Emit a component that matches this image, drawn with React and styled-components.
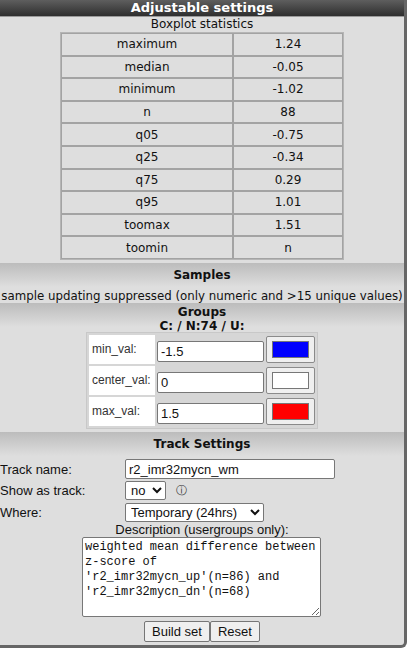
import React from "react";
import styled, { createGlobalStyle } from "styled-components";

const GlobalStyle = createGlobalStyle`
  body {
    margin: 0;
    background: #ffffff;
    font-family: "DejaVu Sans", Verdana, sans-serif;
    color: #111;
  }
`;

const stats = [
  ["maximum", "1.24"],
  ["median", "-0.05"],
  ["minimum", "-1.02"],
  ["n", "88"],
  ["q05", "-0.75"],
  ["q25", "-0.34"],
  ["q75", "0.29"],
  ["q95", "1.01"],
  ["toomax", "1.51"],
  ["toomin", "n"],
];

const groups = [
  { label: "min_val:", value: "-1.5", color: "#0000ff" },
  { label: "center_val:", value: "0", color: "#ffffff" },
  { label: "max_val:", value: "1.5", color: "#ff0000" },
];

const App = () => {
  return (
    <>
      <GlobalStyle />
      <Panel>
        <Header>Adjustable settings</Header>
        <Caption>Boxplot statistics</Caption>
        <StatsTable>
          <tbody>
            {stats.map(([k, v]) => (
              <tr key={k}>
                <StatCell $w={170}>{k}</StatCell>
                <StatCell>{v}</StatCell>
              </tr>
            ))}
          </tbody>
        </StatsTable>

        <Band $gap={3}>
          <BandTitle $top={5}>Samples</BandTitle>
          <Note>sample updating suppressed (only numeric and &gt;15 unique values)</Note>
        </Band>

        <Band $gap={0}>
          <BandTitle $top={2}>Groups</BandTitle>
          <BandTitle>C: / N:74 / U:</BandTitle>
          <GroupTable>
            <tbody>
              {groups.map((g) => (
                <tr key={g.label}>
                  <GroupLabel>{g.label}</GroupLabel>
                  <GroupCell>
                    <ValueInput defaultValue={g.value} />
                  </GroupCell>
                  <GroupCell>
                    <ColorButton>
                      <Swatch $color={g.color} />
                    </ColorButton>
                  </GroupCell>
                </tr>
              ))}
            </tbody>
          </GroupTable>
        </Band>

        <Band $gap={3}>
          <BandTitle $top={5} $bottom={8}>Track Settings</BandTitle>
          <FormGrid>
            <FieldLabel>Track name:</FieldLabel>
            <div>
              <TextInput defaultValue="r2_imr32mycn_wm" />
            </div>
            <FieldLabel>Show as track:</FieldLabel>
            <Inline>
              <Select defaultValue="no" $w={41}>
                <option value="no">no</option>
                <option value="yes">yes</option>
              </Select>
              <Info>ⓘ</Info>
            </Inline>
            <FieldLabel>Where:</FieldLabel>
            <div>
              <Select defaultValue="tmp" $w={139}>
                <option value="tmp">Temporary (24hrs)</option>
                <option value="perm">Permanent</option>
              </Select>
            </div>
          </FormGrid>
          <DescLabel>Description (usergroups only):</DescLabel>
          <DescArea
            defaultValue={
              "weighted mean difference between z-score of 'r2_imr32mycn_up'(n=86) and 'r2_imr32mycn_dn'(n=68)"
            }
          />
          <Buttons>
            <Button>Build set</Button>
            <Button>Reset</Button>
          </Buttons>
        </Band>
      </Panel>
    </>
  );
};

export default App;

const Panel = styled.div`
  width: 404px;
  background: #dedede;
  border-right: 3px solid #666;
  border-bottom: 3px solid #666;
  border-bottom-right-radius: 6px;
  padding-bottom: 3px;
`;

const Header = styled.div`
  height: 16px;
  line-height: 16px;
  background: linear-gradient(#5e5e5e, #2e2e2e);
  color: #fff;
  font-weight: bold;
  font-size: 13px;
  text-align: center;
  border-bottom: 1px solid #9a9a9a;
`;

const Caption = styled.div`
  font-size: 12px;
  text-align: center;
  height: 15px;
  line-height: 15px;
`;

const StatsTable = styled.table`
  width: 284px;
  margin: 0 auto;
  border-collapse: separate;
  border-spacing: 0;
  border: 1px solid #b5b5b5;
`;

const StatCell = styled.td`
  width: ${(p) => (p.$w ? `${p.$w}px` : "auto")};
  height: 20.6px;
  padding: 0;
  border: 1px solid #a3a3a3;
  font-size: 12px;
  text-align: center;
  vertical-align: middle;
`;

const Band = styled.div`
  margin-top: ${(p) => p.$gap}px;
  background: linear-gradient(#bcbcbc 0px, #dedede 24px, #dedede 100%);
  text-align: center;
`;

const BandTitle = styled.div`
  font-weight: bold;
  font-size: 12px;
  line-height: 14px;
  padding-top: ${(p) => p.$top || 0}px;
  padding-bottom: ${(p) => p.$bottom || 0}px;
`;

const Note = styled.div`
  font-size: 11.8px;
  white-space: nowrap;
  padding: 7px 0 0;
  line-height: 14px;
`;

const GroupTable = styled.table`
  margin: -1px auto 0;
  border-collapse: separate;
  border-spacing: 2px;
  background: #d6d6d6;
  border: 1px solid #c8c8c8;
`;

const GroupLabel = styled.td`
  background: #fff;
  font-family: "Liberation Sans", Arial, sans-serif;
  font-size: 12px;
  color: #333;
  text-align: left;
  padding: 0 3px;
  height: 29px;
  width: 60px;
`;

const GroupCell = styled.td`
  padding: 0;
`;

const ValueInput = styled.input`
  box-sizing: border-box;
  width: 107px;
  height: 21px;
  margin-top: 4px;
  padding: 0 3px;
  border: 1px solid #777;
  border-radius: 2px;
  font-family: "Liberation Sans", Arial, sans-serif;
  font-size: 13px;
  color: #111;
  background: #fff;
`;

const ColorButton = styled.div`
  box-sizing: border-box;
  width: 49px;
  height: 27px;
  padding: 4px 5px;
  background: #efefef;
  border: 1px solid #8a8a8a;
  border-radius: 2px;
  display: flex;
`;

const Swatch = styled.span`
  flex: 1;
  background: ${(p) => p.$color};
  border: 1px solid #777;
`;

const FormGrid = styled.div`
  display: grid;
  grid-template-columns: 125px 1fr;
  row-gap: 2px;
  text-align: left;
  align-items: center;
`;

const FieldLabel = styled.div`
  font-family: "Liberation Sans", Arial, sans-serif;
  font-size: 13px;
  color: #111;
`;

const TextInput = styled.input`
  box-sizing: border-box;
  width: 210px;
  height: 20px;
  padding: 0 3px;
  border: 1px solid #777;
  border-radius: 2px;
  font-family: "Liberation Sans", Arial, sans-serif;
  font-size: 13px;
  color: #111;
  background: #fff;
`;

const Inline = styled.div`
  display: flex;
  align-items: center;
  gap: 10px;
`;

const Select = styled.select`
  box-sizing: border-box;
  width: ${(p) => p.$w}px;
  height: 19px;
  padding: 0 1px;
  border: 1px solid #777;
  border-radius: 2px;
  background: #fff;
  font-family: "Liberation Sans", Arial, sans-serif;
  font-size: 13px;
  color: #111;
`;

const Info = styled.span`
  font-size: 11px;
  color: #333;
`;

const DescLabel = styled.div`
  font-family: "Liberation Sans", Arial, sans-serif;
  font-size: 13px;
  line-height: 15px;
`;

const DescArea = styled.textarea`
  display: block;
  box-sizing: border-box;
  width: 239px;
  height: 80px;
  margin: 0 auto 0 82px;
  padding: 2px 2px;
  border: 1px solid #777;
  border-radius: 2px;
  font-family: "Liberation Mono", "DejaVu Sans Mono", monospace;
  font-size: 12px;
  line-height: 15px;
  color: #111;
  background: #fff;
  resize: both;
`;

const Buttons = styled.div`
  display: flex;
  justify-content: center;
  padding-top: 4px;
`;

const Button = styled.button`
  height: 21px;
  padding: 0 7px;
  margin: 0;
  background: #efefef;
  border: 1px solid #767676;
  border-radius: 2px;
  font-family: "Liberation Sans", Arial, sans-serif;
  font-size: 13px;
  color: #111;
`;
